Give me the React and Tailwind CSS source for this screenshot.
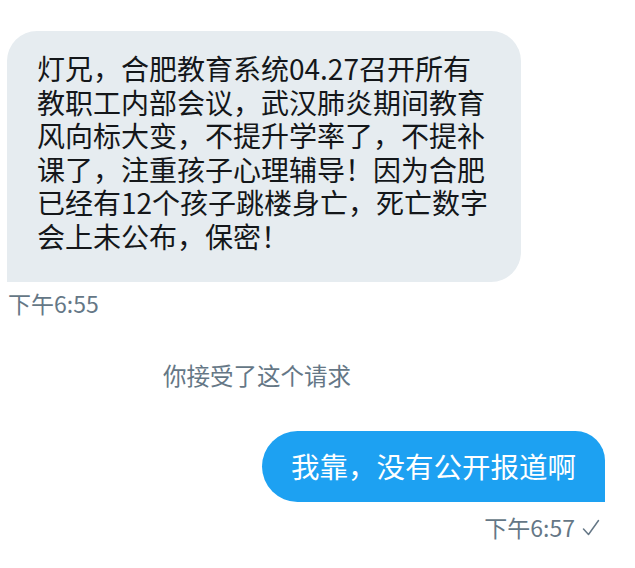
export default function App() {
  const lines = [
    '灯兄，合肥教育系统04.27召开所有',
    '教职工内部会议，武汉肺炎期间教育',
    '风向标大变，不提升学率了，不提补',
    '课了，注重孩子心理辅导！因为合肥',
    '已经有12个孩子跳楼身亡，死亡数字',
    '会上未公布，保密！',
  ];

  return (
    <div className="w-[635px] h-[568px] bg-white overflow-hidden font-['Noto_Sans_CJK_SC',sans-serif]">
      {/* incoming message */}
      <div className="pt-[31px] pl-[7px]">
        <div className="w-[514px] bg-[#e6ecf0] rounded-[30px] rounded-bl-none pl-[30px] pt-[21px] pb-[29px] text-[28px] leading-[33.5px] text-[#14171a]">
          {lines.map((l) => (
            <div key={l} className="whitespace-nowrap">{l}</div>
          ))}
        </div>
        <div className="mt-[6px] ml-px text-[23px] leading-[30px] text-[#657786]">下午6:55</div>
      </div>

      {/* system notice */}
      <div className="mt-[42px] ml-[163px] text-[23.5px] leading-[30px] text-[#657786]">
        你接受了这个请求
      </div>

      {/* outgoing message */}
      <div className="mt-[41px] pr-[30px] flex flex-col items-end">
        <div className="h-[71px] flex items-center bg-[#1da1f2] rounded-l-[36px] rounded-tr-[30px] pl-[29px] pr-[29px] text-[28.5px] text-white whitespace-nowrap">
          我靠，没有公开报道啊
        </div>
        <div className="mt-[10px] mr-[5px] flex items-center gap-[7px] text-[23px] leading-[30px] text-[#657786]">
          <span>下午6:57</span>
          <svg width="18" height="17" viewBox="0 0 18 17" fill="none" stroke="#657786" strokeWidth="1.5" strokeLinecap="round" strokeLinejoin="round">
            <path d="M1.5 10 L6.5 15.5 L16.5 1.5" />
          </svg>
        </div>
      </div>
    </div>
  );
}
